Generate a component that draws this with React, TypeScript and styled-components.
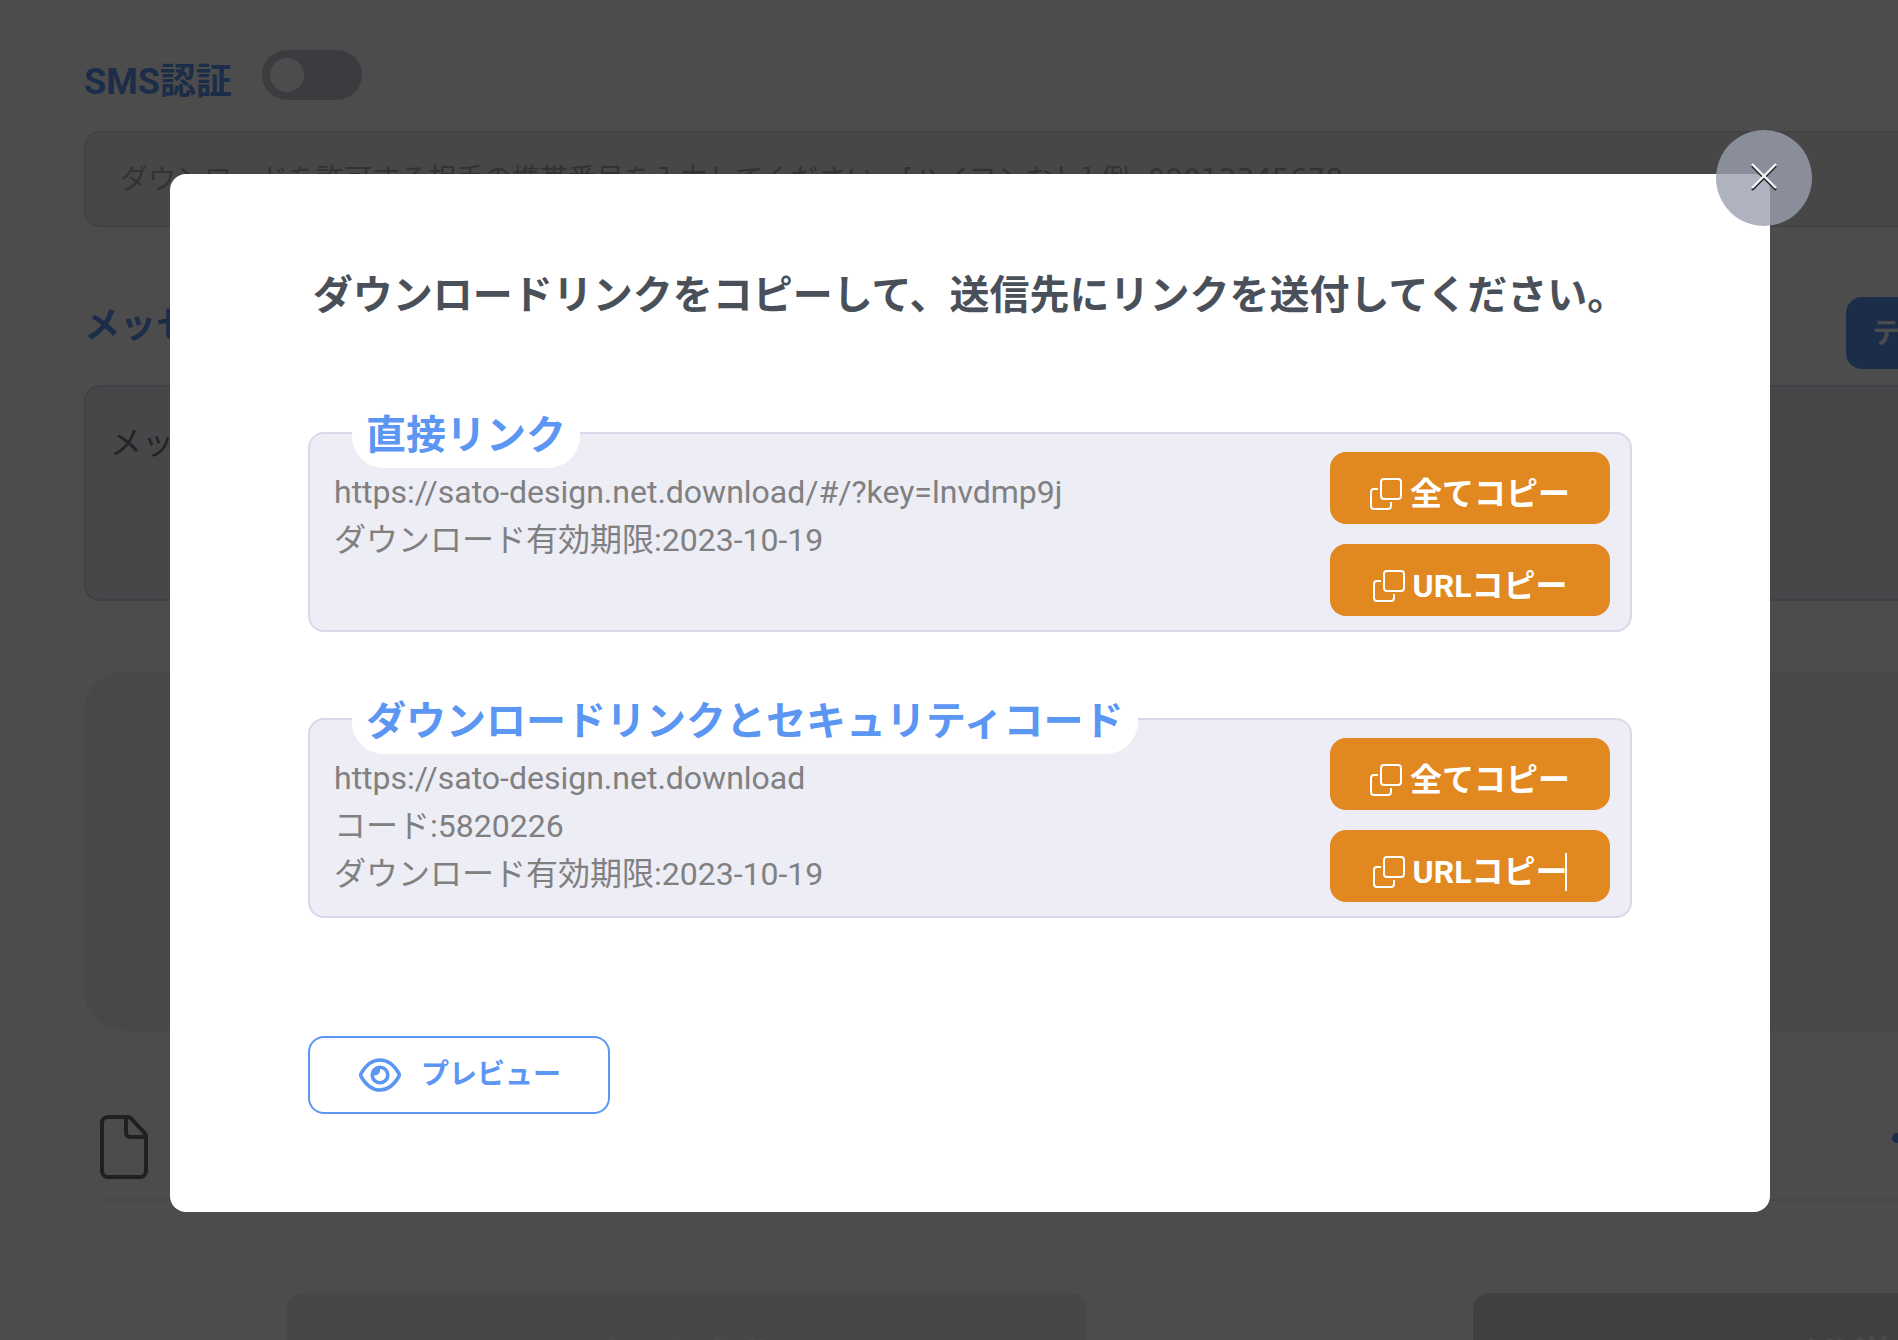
import React, { useState } from "react";
import styled, { createGlobalStyle } from "styled-components";

const blue = "#5c96f3";

const GlobalStyle = createGlobalStyle`
  *, *::before, *::after { box-sizing: border-box; }
  body {
    margin: 0;
    overflow: hidden;
    background: #fff;
    color: #222;
    font-family: Roboto, "Noto Sans CJK JP", sans-serif;
  }
  button, input, textarea { font-family: inherit; }
  button { cursor: pointer; }
`;

const Shell = styled.div`
  height: 100vh;
  overflow: hidden;
`;

const Page = styled.main`
  width: calc(100% + 662px);
  padding: 50px 84px 0;
`;

const SwitchRow = styled.div`
  display: flex;
  align-items: flex-start;
  gap: 30px;
  height: 50px;
  margin-bottom: 31px;
`;

const FieldLabel = styled.label`
  padding-top: 4px;
  color: ${blue};
  font-size: 36px;
  font-weight: 700;
  line-height: 50px;
`;

const SwitchLabel = styled(FieldLabel)`
  padding-top: 7px;
`;

const Switch = styled.input`
  appearance: none;
  display: flex;
  align-items: center;
  width: 100px;
  height: 50px;
  margin: 0;
  padding: 0 8px;
  border-radius: 25px;
  background: #c8cad6;
  &::before {
    content: "";
    width: 34px;
    height: 34px;
    border-radius: 50%;
    background: #fff;
  }
  &:checked { justify-content: flex-end; background: ${blue}; }
`;

const PhoneInput = styled.input`
  display: block;
  width: 100%;
  height: 96px;
  padding: 0 34px;
  border: 2px solid #dcdbe6;
  border-radius: 16px;
  background: #eee;
  font-family: "DejaVu Sans", "Noto Sans CJK JP", sans-serif;
  font-size: 28px;
  &::placeholder { color: #a9a9b4; opacity: 1; }
`;

const MessageHead = styled.div`
  display: flex;
  align-items: flex-start;
  justify-content: space-between;
  margin: 70px 0 16px;
`;

const TemplateButton = styled.button`
  width: 630px;
  height: 72px;
  padding: 0 26px 4px;
  border: 0;
  border-radius: 16px;
  background: ${blue};
  color: #fff;
  font-size: 28px;
  font-weight: 700;
  text-align: left;
`;

const MessageBox = styled.textarea`
  display: block;
  width: 100%;
  height: 216px;
  padding: 32px 24px;
  border: 2px solid #dad9e8;
  border-radius: 16px;
  background: #ededf6;
  font-size: 32px;
  line-height: 48px;
  resize: none;
  &::placeholder { color: #757575; opacity: 1; }
`;

const DropZone = styled.div`
  height: 360px;
  margin: 70px 0 68px;
  border-radius: 40px;
  background: #f1f1f1;
`;

const FileRow = styled.div`
  display: flex;
  align-items: flex-start;
  justify-content: space-between;
  height: 102px;
  margin: 0 16px 92px;
  padding-top: 16px;
  border-bottom: 2px solid #eee;
`;

const MoreButton = styled.button`
  display: flex;
  gap: 6px;
  width: 568px;
  margin-top: 18px;
  padding: 0;
  border: 0;
  background: none;
`;

const Dot = styled.span`
  width: 10px;
  height: 10px;
  border-radius: 50%;
  background: ${blue};
`;

const Actions = styled.div`
  display: flex;
  justify-content: center;
  gap: 386px;
`;

const ActionButton = styled.button<{ $strong?: boolean }>`
  width: 800px;
  height: 116px;
  border: 0;
  border-radius: 16px;
  background: ${(p) => (p.$strong ? "#d6d6d6" : "#eee")};
  color: #fff;
  font-size: 36px;
  font-weight: 700;
`;

const Backdrop = styled.div`
  position: fixed;
  inset: 0;
  display: flex;
  align-items: flex-start;
  justify-content: center;
  padding: 174px 128px 0 170px;
  background: rgba(0, 0, 0, 0.7);
`;

const Dialog = styled.section`
  position: relative;
  width: 100%;
  max-width: 1600px;
  padding: 92px 138px 98px;
  border-radius: 16px;
  background: #fff;
`;

const CloseButton = styled.button`
  position: absolute;
  top: -44px;
  right: -42px;
  display: flex;
  align-items: center;
  justify-content: center;
  width: 96px;
  height: 96px;
  padding: 0 0 2px;
  border: 0;
  border-radius: 50%;
  background: rgba(155, 160, 175, 0.8);
`;

const Title = styled.h1`
  margin: 0 0 106px;
  color: #495059;
  font-size: 40px;
  font-weight: 700;
  line-height: 60px;
  text-align: center;
  white-space: nowrap;
`;

const Card = styled.section`
  position: relative;
  display: flex;
  justify-content: space-between;
  min-height: 200px;
  margin-bottom: 86px;
  padding: 18px 20px 14px 24px;
  border: 2px solid #d9d8ea;
  border-radius: 16px;
  background: #ededf6;
`;

const CardTitle = styled.h2`
  position: absolute;
  top: -34px;
  left: 42px;
  margin: 0;
  padding: 4px 14px 0;
  border-radius: 32px;
  background: #fff;
  color: ${blue};
  font-size: 40px;
  font-weight: 700;
  line-height: 64px;
  white-space: nowrap;
`;

const CardText = styled.p`
  margin: 0;
  padding-top: 16px;
  color: #808080;
  font-size: 32px;
  line-height: 48px;
`;

const Line = styled.span`
  display: block;
`;

const CopyActions = styled.div`
  display: flex;
  flex-direction: column;
  gap: 20px;
`;

const CopyButton = styled.button`
  display: flex;
  align-items: center;
  justify-content: center;
  gap: 8px;
  width: 280px;
  height: 72px;
  padding: 12px 0 0;
  border: 0;
  border-radius: 16px;
  background: #e18820;
  color: #fff;
  font-size: 32px;
  font-weight: 700;
  line-height: 38px;
`;

const CopyLabel = styled.span`
  position: relative;
`;

const Caret = styled.span`
  position: absolute;
  top: 0;
  right: 0;
  width: 2px;
  height: 38px;
  background: #fff;
`;

const PreviewButton = styled.button`
  display: flex;
  align-items: center;
  justify-content: center;
  gap: 20px;
  width: 302px;
  height: 78px;
  margin-top: 118px;
  padding: 0 0 0 2px;
  border: 2px solid ${blue};
  border-radius: 16px;
  background: #fff;
  color: ${blue};
  font-size: 28px;
  font-weight: 700;
  line-height: 40px;
`;

const FileIcon = () => (
  <svg width="48" height="64" viewBox="0 0 48 64" fill="none" stroke="#6d6d6d" strokeWidth="4" strokeLinejoin="round">
    <path d="M8 2h20a4 4 0 0 1 3 1.3l13.5 14.5A5 5 0 0 1 46 21v35a6 6 0 0 1-6 6H8a6 6 0 0 1-6-6V8a6 6 0 0 1 6-6z" />
    <path d="M26 2v16a4 4 0 0 0 4 4h16" />
  </svg>
);

const CloseIcon = () => (
  <svg width="28" height="32" viewBox="0 0 28 32" fill="none" strokeWidth="2.4">
    <path d="M2 5l24 24M26 5L2 29" stroke="#222" />
    <path d="M2 3l24 24M26 3L2 27" stroke="#f4f4f4" />
  </svg>
);

const CopyIcon = () => (
  <svg width="32" height="32" viewBox="0 0 32 32" fill="none" stroke="currentColor" strokeWidth="2">
    <rect x="11" y="1" width="20" height="20" rx="3" />
    <path d="M8 11H4a3 3 0 0 0-3 3v14a3 3 0 0 0 3 3h14a3 3 0 0 0 3-3v-4" />
  </svg>
);

const EyeIcon = () => (
  <svg width="42" height="34" viewBox="1 0 42 34" fill="none" stroke="currentColor" strokeWidth="3.6">
    <path d="M3.3 15.2C8 7 14 2 22 2s14 5 18.7 13.2a3.5 3.5 0 0 1 0 3.6C36 27 30 32 22 32S8 27 3.3 18.8a3.5 3.5 0 0 1 0-3.6z" />
    <circle cx="22" cy="17" r="7.8" />
    <path d="M22 9v3.5a5 5 0 0 1-5 5h-2a8 8 0 0 1 7-8z" fill="currentColor" stroke="none" />
  </svg>
);

const links = [
  {
    title: "直接リンク",
    lines: ["https://sato-design.net.download/#/?key=lnvdmp9j", "ダウンロード有効期限:2023-10-19"],
    caret: false,
  },
  {
    title: "ダウンロードリンクとセキュリティコード",
    lines: ["https://sato-design.net.download", "コード:5820226", "ダウンロード有効期限:2023-10-19"],
    caret: true,
  },
];

export default function App() {
  const [sms, setSms] = useState(false);
  return (
    <>
      <GlobalStyle />
      <Shell>
        <Page>
          <SwitchRow>
            <SwitchLabel htmlFor="sms">SMS認証</SwitchLabel>
            <Switch id="sms" type="checkbox" checked={sms} onChange={(e) => setSms(e.target.checked)} />
          </SwitchRow>
          <PhoneInput
            aria-label="携帯番号"
            placeholder="ダウンロードを許可する相手の携帯番号を入力してください。[ハイフンなし] 例: 09012345678"
          />
          <MessageHead>
            <FieldLabel htmlFor="message">メッセージ</FieldLabel>
            <TemplateButton type="button">テンプレート</TemplateButton>
          </MessageHead>
          <MessageBox id="message" placeholder="メッセージ" />
          <DropZone />
          <FileRow>
            <FileIcon />
            <MoreButton type="button" aria-label="メニュー">
              <Dot />
              <Dot />
              <Dot />
            </MoreButton>
          </FileRow>
          <Actions>
            <ActionButton type="button">キャンセル</ActionButton>
            <ActionButton type="button" $strong>ファイル送信を開始</ActionButton>
          </Actions>
        </Page>
      </Shell>
      <Backdrop>
        <Dialog role="dialog" aria-modal="true" aria-labelledby="dialog-title">
          <CloseButton type="button" aria-label="閉じる">
            <CloseIcon />
          </CloseButton>
          <Title id="dialog-title">ダウンロードリンクをコピーして、送信先にリンクを送付してください。</Title>
          {links.map((link) => (
            <Card key={link.title}>
              <CardTitle>{link.title}</CardTitle>
              <CardText>
                {link.lines.map((line) => (
                  <Line key={line}>{line}</Line>
                ))}
              </CardText>
              <CopyActions>
                <CopyButton type="button">
                  <CopyIcon />
                  <CopyLabel>全てコピー</CopyLabel>
                </CopyButton>
                <CopyButton type="button">
                  <CopyIcon />
                  <CopyLabel>
                    URLコピー
                    {link.caret && <Caret />}
                  </CopyLabel>
                </CopyButton>
              </CopyActions>
            </Card>
          ))}
          <PreviewButton type="button">
            <EyeIcon />
            プレビュー
          </PreviewButton>
        </Dialog>
      </Backdrop>
    </>
  );
}
